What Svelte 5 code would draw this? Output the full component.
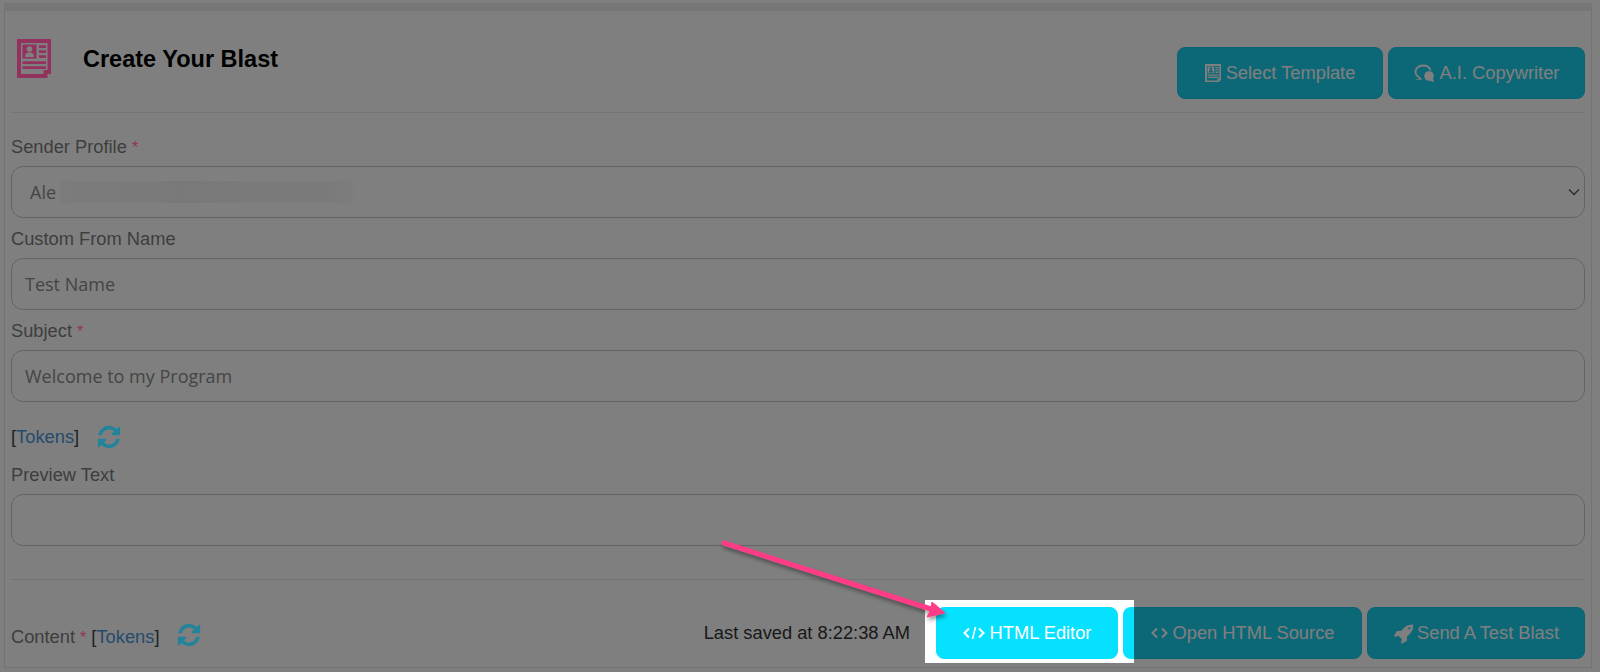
<script lang="ts">
	const refresh =
		'M1639 1056q0 5-1 7-64 268-268 434.5t-478 166.5q-146 0-282.5-55t-243.5-157l-129 129q-19 19-45 19t-45-19-19-45v-448q0-26 19-45t45-19h448q26 0 45 19t19 45-19 45l-137 137q71 66 161 102t187 36q134 0 250-65t186-179q11-17 53-117 8-23 30-23h192q13 0 22.5 9.500t9.500 22.500zm25-800v448q0 26-19 45t-45 19h-448q-26 0-45-19t-19-45 19-45l138-138q-148-137-349-137-134 0-250 65t-186 179q-11 17-53 117-8 23-30 23h-199q-13 0-22.500-9.500t-9.500-22.500v-7q65-268 270-434.500t480-166.500q146 0 284 55.500t245 156.500l130-129q19-19 45-19t45 19 19 45z';
	const rocket =
		'M1504 448q0-40-28-68t-68-28-68 28-28 68 28 68 68 28 68-28 28-68zm224-288q0 249-75.500 430.500t-253.500 360.500q-81 80-195 176l-20 379q-2 16-16 26l-384 224q-7 4-16 4-12 0-23-9l-64-64q-13-14-8-32l85-276-281-281-276 85q-3 1-9 1-14 0-23-9l-64-64q-17-19-5-39l224-384q10-14 26-16l379-20q96-114 176-195 188-187 358-258t431-71q14 0 24 9.500t10 22.500z';
</script>

{#snippet newsIcon(size, hole)}
	<svg width={size} height={size * 1.15} viewBox="0 0 34 39" fill="none" stroke="currentColor">
		<path d="M2 37V2H32.500V33H28.500V37H2Z" stroke-width="4" />
		<rect x="5.500" y="5.500" width="14" height="14" fill="currentColor" stroke="none" />
		<circle cx="12.500" cy="10" r="2.800" fill={hole} stroke="none" />
		<path d="M8 18c0-3.500 2-4.500 4.500-4.500s4.500 1 4.500 4.500z" fill={hole} stroke="none" />
		<path d="M22 7.500h7M22 12.500h7M22 17.500h7M5.500 23.500h23.500M5.500 28.500h23.500" stroke-width="2.800" />
	</svg>
{/snippet}

{#snippet refreshIcon()}
	<svg class="refresh" width="26" height="26" viewBox="0 0 1792 1792" fill="currentColor"><path d={refresh} /></svg>
{/snippet}

<div class="page">
	<div class="card">
		<header class="head">
			<div class="title">
				<span class="logo">{@render newsIcon(34, '#808080')}</span>
				<h1>Create Your Blast</h1>
			</div>
			<div class="actions">
				<button class="btn tmpl">
					{@render newsIcon(16, '#19cfee')}
					Select Template
				</button>
				<button class="btn copy">
					<svg width="21" height="19" viewBox="0 0 21 19" fill="none">
						<path d="M5.500 13.500C2.800 12.200 1.500 10 1.500 7.800C1.500 4 5 1.500 9 1.500C12.800 1.500 15.800 3.500 16.500 6.500" stroke="currentColor" stroke-width="1.800" />
						<path d="M5.200 12.500L5 14.500L1 16L8.500 15.500Z" fill="currentColor" />
						<circle cx="15" cy="12" r="4.800" fill="currentColor" />
						<path d="M15 16L19.800 18.500L19 14Z" fill="currentColor" />
					</svg>
					A.I. Copywriter
				</button>
			</div>
		</header>

		<div class="fields">
			<div class="field">
				<span class="label">Sender Profile <span class="req">*</span></span>
				<div class="control select">
					<span>Ale</span>
					<span class="blur"></span>
					<svg class="chev" width="12" height="8" viewBox="0 0 12 8" fill="none" stroke="#555" stroke-width="1.300">
						<path d="M1 1.500L6 6.500L11 1.500" />
					</svg>
				</div>
			</div>
			<div class="field">
				<label class="label" for="from">Custom From Name</label>
				<input class="control" id="from" value="Test Name" readonly />
			</div>
			<div class="field">
				<label class="label" for="subject">Subject <span class="req">*</span></label>
				<input class="control" id="subject" value="Welcome to my Program" readonly />
			</div>
		</div>

		<div class="tokens-row">
			<span class="tokens">[<a href="#tokens">Tokens</a>]</span>
			{@render refreshIcon()}
		</div>

		<div class="field preview">
			<label class="label" for="preview">Preview Text</label>
			<input class="control" id="preview" readonly />
		</div>

		<footer class="foot">
			<div class="content-label">
				<span class="lbl">Content <span class="req">*</span></span>
				<span class="tokens">[<a href="#tokens">Tokens</a>]</span>
				{@render refreshIcon()}
			</div>
			<div class="foot-actions">
				<span class="saved">Last saved at 8:22:38 AM</span>
				<span class="spot">
					<button class="btn lit">
						<svg width="22" height="14" viewBox="0 0 22 14" fill="none" stroke="currentColor" stroke-width="2">
							<path d="M6 2.500L1.500 7L6 11.500M16 2.500L20.500 7L16 11.500" />
							<path d="M12.500 1L9.500 13" stroke-width="1.500" />
						</svg>
						HTML Editor
					</button>
				</span>
				<button class="btn source">
					<svg width="17" height="12" viewBox="0 0 17 12" fill="none" stroke="currentColor" stroke-width="2">
						<path d="M6 1.500L1.500 6L6 10.500M11 1.500L15.500 6L11 10.500" />
					</svg>
					Open HTML Source
				</button>
				<button class="btn send">
					<svg width="21" height="21" viewBox="0 0 1792 1792" fill="currentColor"><path d={rocket} /></svg>
					Send A Test Blast
				</button>
			</div>
		</footer>
	</div>

	<div class="dim"></div>

	<svg class="arrow" width="240" height="90" viewBox="0 0 240 90" fill="none">
		<defs>
			<filter id="soft" x="-10%" y="-30%" width="120%" height="170%">
				<feDropShadow dx="1" dy="3" stdDeviation="2" flood-color="#000" flood-opacity="0.4" />
			</filter>
		</defs>
		<g filter="url(#soft)">
			<path d="M5 7L212 73" stroke="#ff3d87" stroke-width="5" stroke-linecap="round" />
			<path d="M213 66L226 77L208 81L212 73Z" fill="#ff3d87" stroke="#ff3d87" stroke-width="1" />
		</g>
	</svg>
</div>

<style>
	:global(body) {
		margin: 0;
		background: #fff;
	}

	.page {
		position: relative;
		width: 1600px;
		height: 672px;
		overflow: hidden;
		box-sizing: border-box;
		padding: 3px 8px 4px 4px;
		font-family: 'Liberation Sans', Arial, sans-serif;
		font-size: 18.3px;
		color: #000;
		background: #fff;
	}

	.card {
		height: 100%;
		box-sizing: border-box;
		border: 1px solid #e6e6e6;
		border-top: 8px solid #ececec;
		padding: 0 6px;
	}

	.head {
		display: flex;
		justify-content: space-between;
		height: 102px;
		box-sizing: border-box;
		padding: 25px 0 13px;
		border-bottom: 1px solid #e9e9e9;
	}

	.title {
		display: flex;
		align-items: flex-start;
	}

	.logo {
		position: relative;
		z-index: 3;
		width: 66px;
		padding: 3px 0 0 6px;
		color: #94325f;
	}

	h1 {
		margin: 9px 0 0;
		font-size: 23.5px;
		line-height: 28px;
		font-weight: 700;
	}

	.actions,
	.foot-actions {
		display: flex;
		align-items: center;
		gap: 5px;
	}

	.actions {
		align-self: flex-end;
	}

	.btn {
		display: inline-flex;
		align-items: center;
		justify-content: center;
		gap: 5px;
		height: 52px;
		box-sizing: border-box;
		padding: 0;
		border: 1px solid #16c8e6;
		border-radius: 8px;
		background: #19cfee;
		color: #fff;
		font-family: inherit;
		font-size: 18.3px;
	}

	.tmpl {
		width: 206px;
	}

	.copy {
		width: 197px;
	}

	.fields {
		padding-top: 13px;
	}

	.label {
		display: block;
		height: 40px;
		line-height: 42px;
		color: #7c7c7c;
	}

	.lbl {
		color: #7c7c7c;
	}

	.req {
		position: relative;
		z-index: 3;
		font-size: 16px;
		color: #94325f;
	}

	.control {
		display: flex;
		align-items: center;
		width: 100%;
		height: 52px;
		box-sizing: border-box;
		margin: 0;
		padding: 0 13px;
		border: 1px solid #c8c8cc;
		border-radius: 12px;
		outline: none;
		background: transparent;
		font-family: 'Open Sans', sans-serif;
		font-size: 18px;
		color: #8a8a8a;
	}

	.select {
		padding-left: 18px;
	}

	.blur {
		width: 295px;
		height: 22px;
		margin-left: 4px;
		background: linear-gradient(90deg, #f8f8f8, #f3f3f3 40%, #f5f5f5 90%, #fbfbfb);
	}

	.chev {
		margin-left: auto;
		margin-right: -9px;
	}

	.tokens-row {
		display: flex;
		align-items: center;
		gap: 17px;
		height: 32px;
		padding: 19px 0 1px;
	}

	.tokens {
		color: #444;
	}

	.tokens a {
		color: #4a96d8;
		text-decoration: none;
	}

	.refresh {
		position: relative;
		z-index: 3;
		color: #238499;
	}

	.preview {
		padding-bottom: 33px;
		border-bottom: 1px solid #e9e9e9;
	}

	.foot {
		display: flex;
		justify-content: space-between;
		align-items: center;
		padding-top: 27px;
	}

	.content-label {
		display: flex;
		align-items: center;
		gap: 5px;
		padding-top: 8px;
	}

	.content-label .refresh {
		margin-left: 12px;
		margin-top: -4px;
	}

	.saved {
		margin-right: 10px;
		color: #333;
	}

	.spot {
		position: relative;
		z-index: 3;
		display: flex;
		margin: -7px -16px -4px 0;
		padding: 7px 16px 4px 11px;
		background: #fff;
	}

	.lit {
		width: 182px;
		border-color: #06e1ff;
		background: #06e1ff;
	}

	.source {
		position: relative;
		width: 239px;
	}

	.source::before {
		content: '';
		position: absolute;
		z-index: 4;
		left: -1px;
		top: -1px;
		bottom: -1px;
		width: 11px;
		border-radius: 8px 0 0 8px;
		background: #06e1ff;
	}

	.send {
		width: 218px;
		gap: 3px;
	}

	.dim {
		position: absolute;
		inset: 0;
		z-index: 2;
		background: rgba(0, 0, 0, 0.5);
	}

	.arrow {
		position: absolute;
		z-index: 5;
		left: 719px;
		top: 536px;
	}
</style>
